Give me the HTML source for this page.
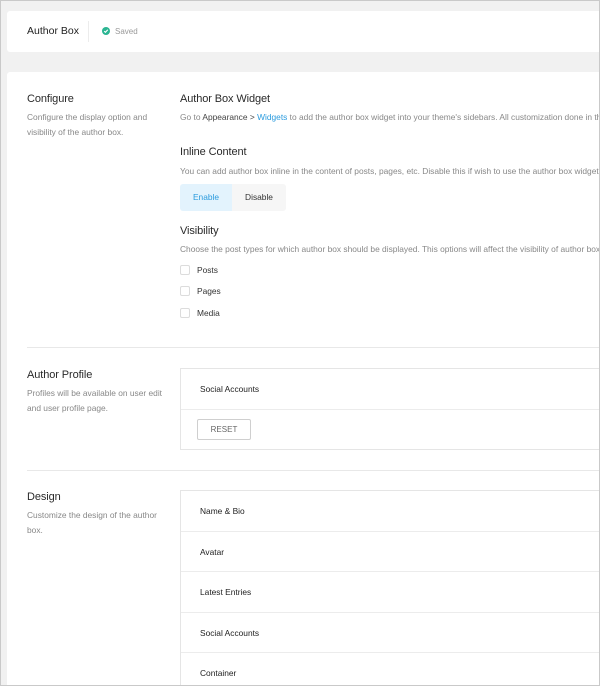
<!DOCTYPE html>
<html><head><meta charset="utf-8"><style>
*{box-sizing:border-box;margin:0;padding:0}
body{width:600px;height:686px;overflow:hidden;background:#fff;font-family:"Liberation Sans",sans-serif}
.frame{position:absolute;left:0;top:0;width:600px;height:686px;border:1px solid #c9c9c9;background:#f1f1f1;overflow:hidden}
.abs{position:absolute;white-space:nowrap}
.hdr{position:absolute;left:6px;top:10px;width:600px;height:41px;background:#fff;border-radius:3px}
.main{position:absolute;left:6px;top:71px;width:600px;height:620px;background:#fff;border-radius:3px}
.h{font-size:11px;color:#2a2a2a;letter-spacing:-0.1px}
.t{font-size:8.4px;color:#888}
.d{font-size:8.4px;color:#888;line-height:14.5px}
.hr{position:absolute;left:26px;width:600px;height:1px;background:#e8e8e8}
.panel{position:absolute;left:179px;width:500px;border:1px solid #e5e5e5;background:#fff;overflow:hidden}
.row{height:40.6px;border-bottom:1px solid #ececec;font-size:8.4px;color:#222;padding-left:19px;line-height:40px}
.cb{position:absolute;left:179px;width:10px;height:10px;border:1px solid #dcdcdc;border-radius:2px;background:#fff}
.cl{position:absolute;left:196px;font-size:8.4px;color:#333}
</style></head><body><div class="frame">
<div class="hdr"></div>
<div class="abs" style="left:26px;top:24px;font-size:10.5px;color:#222">Author Box</div>
<div class="abs" style="left:87px;top:20px;width:1px;height:21px;background:#ececec"></div>
<svg class="abs" style="left:101px;top:26px" width="8" height="8" viewBox="0 0 8 8"><circle cx="4" cy="4" r="4" fill="#2bb592"/><path d="M2.2 4.1l1.2 1.2 2.4-2.5" stroke="#fff" stroke-width="1.1" fill="none"/></svg>
<div class="abs" style="left:114px;top:26px;font-size:8px;color:#999">Saved</div>
<div class="main"></div>

<div class="abs h" style="left:26px;top:92px">Configure</div>
<div class="abs d" style="left:26px;top:109px">Configure the display option and<br>visibility of the author box.</div>
<div class="abs h" style="left:179px;top:92px">Author Box Widget</div>
<div class="abs t" style="left:179px;top:111px">Go to <span style="color:#444">Appearance</span> <span style="color:#444">&gt;</span> <span style="color:#2b9bde">Widgets</span> to add the author box widget into your theme's sidebars. All customization done in this</div>
<div class="abs h" style="left:179px;top:145px">Inline Content</div>
<div class="abs t" style="left:179px;top:165px">You can add author box inline in the content of posts, pages, etc. Disable this if wish to use the author box widget only</div>
<div class="abs" style="left:179px;top:183px;width:52px;height:27px;background:#e3f3fd;border-radius:3px 0 0 3px;font-size:8.4px;color:#2b9bde;text-align:center;line-height:27px">Enable</div>
<div class="abs" style="left:231px;top:183px;width:54px;height:27px;background:#f6f6f6;border-radius:0 3px 3px 0;font-size:8.4px;color:#333;text-align:center;line-height:27px">Disable</div>
<div class="abs h" style="left:179px;top:224px">Visibility</div>
<div class="abs t" style="left:179px;top:243px">Choose the post types for which author box should be displayed. This options will affect the visibility of author box</div>
<div class="cb" style="top:264px"></div><div class="cl" style="top:264px">Posts</div>
<div class="cb" style="top:285px"></div><div class="cl" style="top:285px">Pages</div>
<div class="cb" style="top:307px"></div><div class="cl" style="top:307px">Media</div>

<div class="hr" style="top:346px"></div>
<div class="abs h" style="left:26px;top:368px">Author Profile</div>
<div class="abs d" style="left:26px;top:385px">Profiles will be available on user edit<br>and user profile page.</div>
<div class="panel" style="top:367px;height:82px">
<div class="row" style="height:41px">Social Accounts</div>
<div class="abs" style="left:16px;top:50px;width:54px;height:21px;border:1px solid #cfcfcf;border-radius:2px;font-size:8px;color:#666;text-align:center;line-height:19px">RESET</div>
</div>

<div class="hr" style="top:469px"></div>
<div class="abs h" style="left:26px;top:490px">Design</div>
<div class="abs d" style="left:26px;top:507px">Customize the design of the author<br>box.</div>
<div class="panel" style="top:489px;height:200px">
<div class="row">Name &amp; Bio</div>
<div class="row">Avatar</div>
<div class="row">Latest Entries</div>
<div class="row">Social Accounts</div>
<div class="row">Container</div>
</div>
</div></body></html>
